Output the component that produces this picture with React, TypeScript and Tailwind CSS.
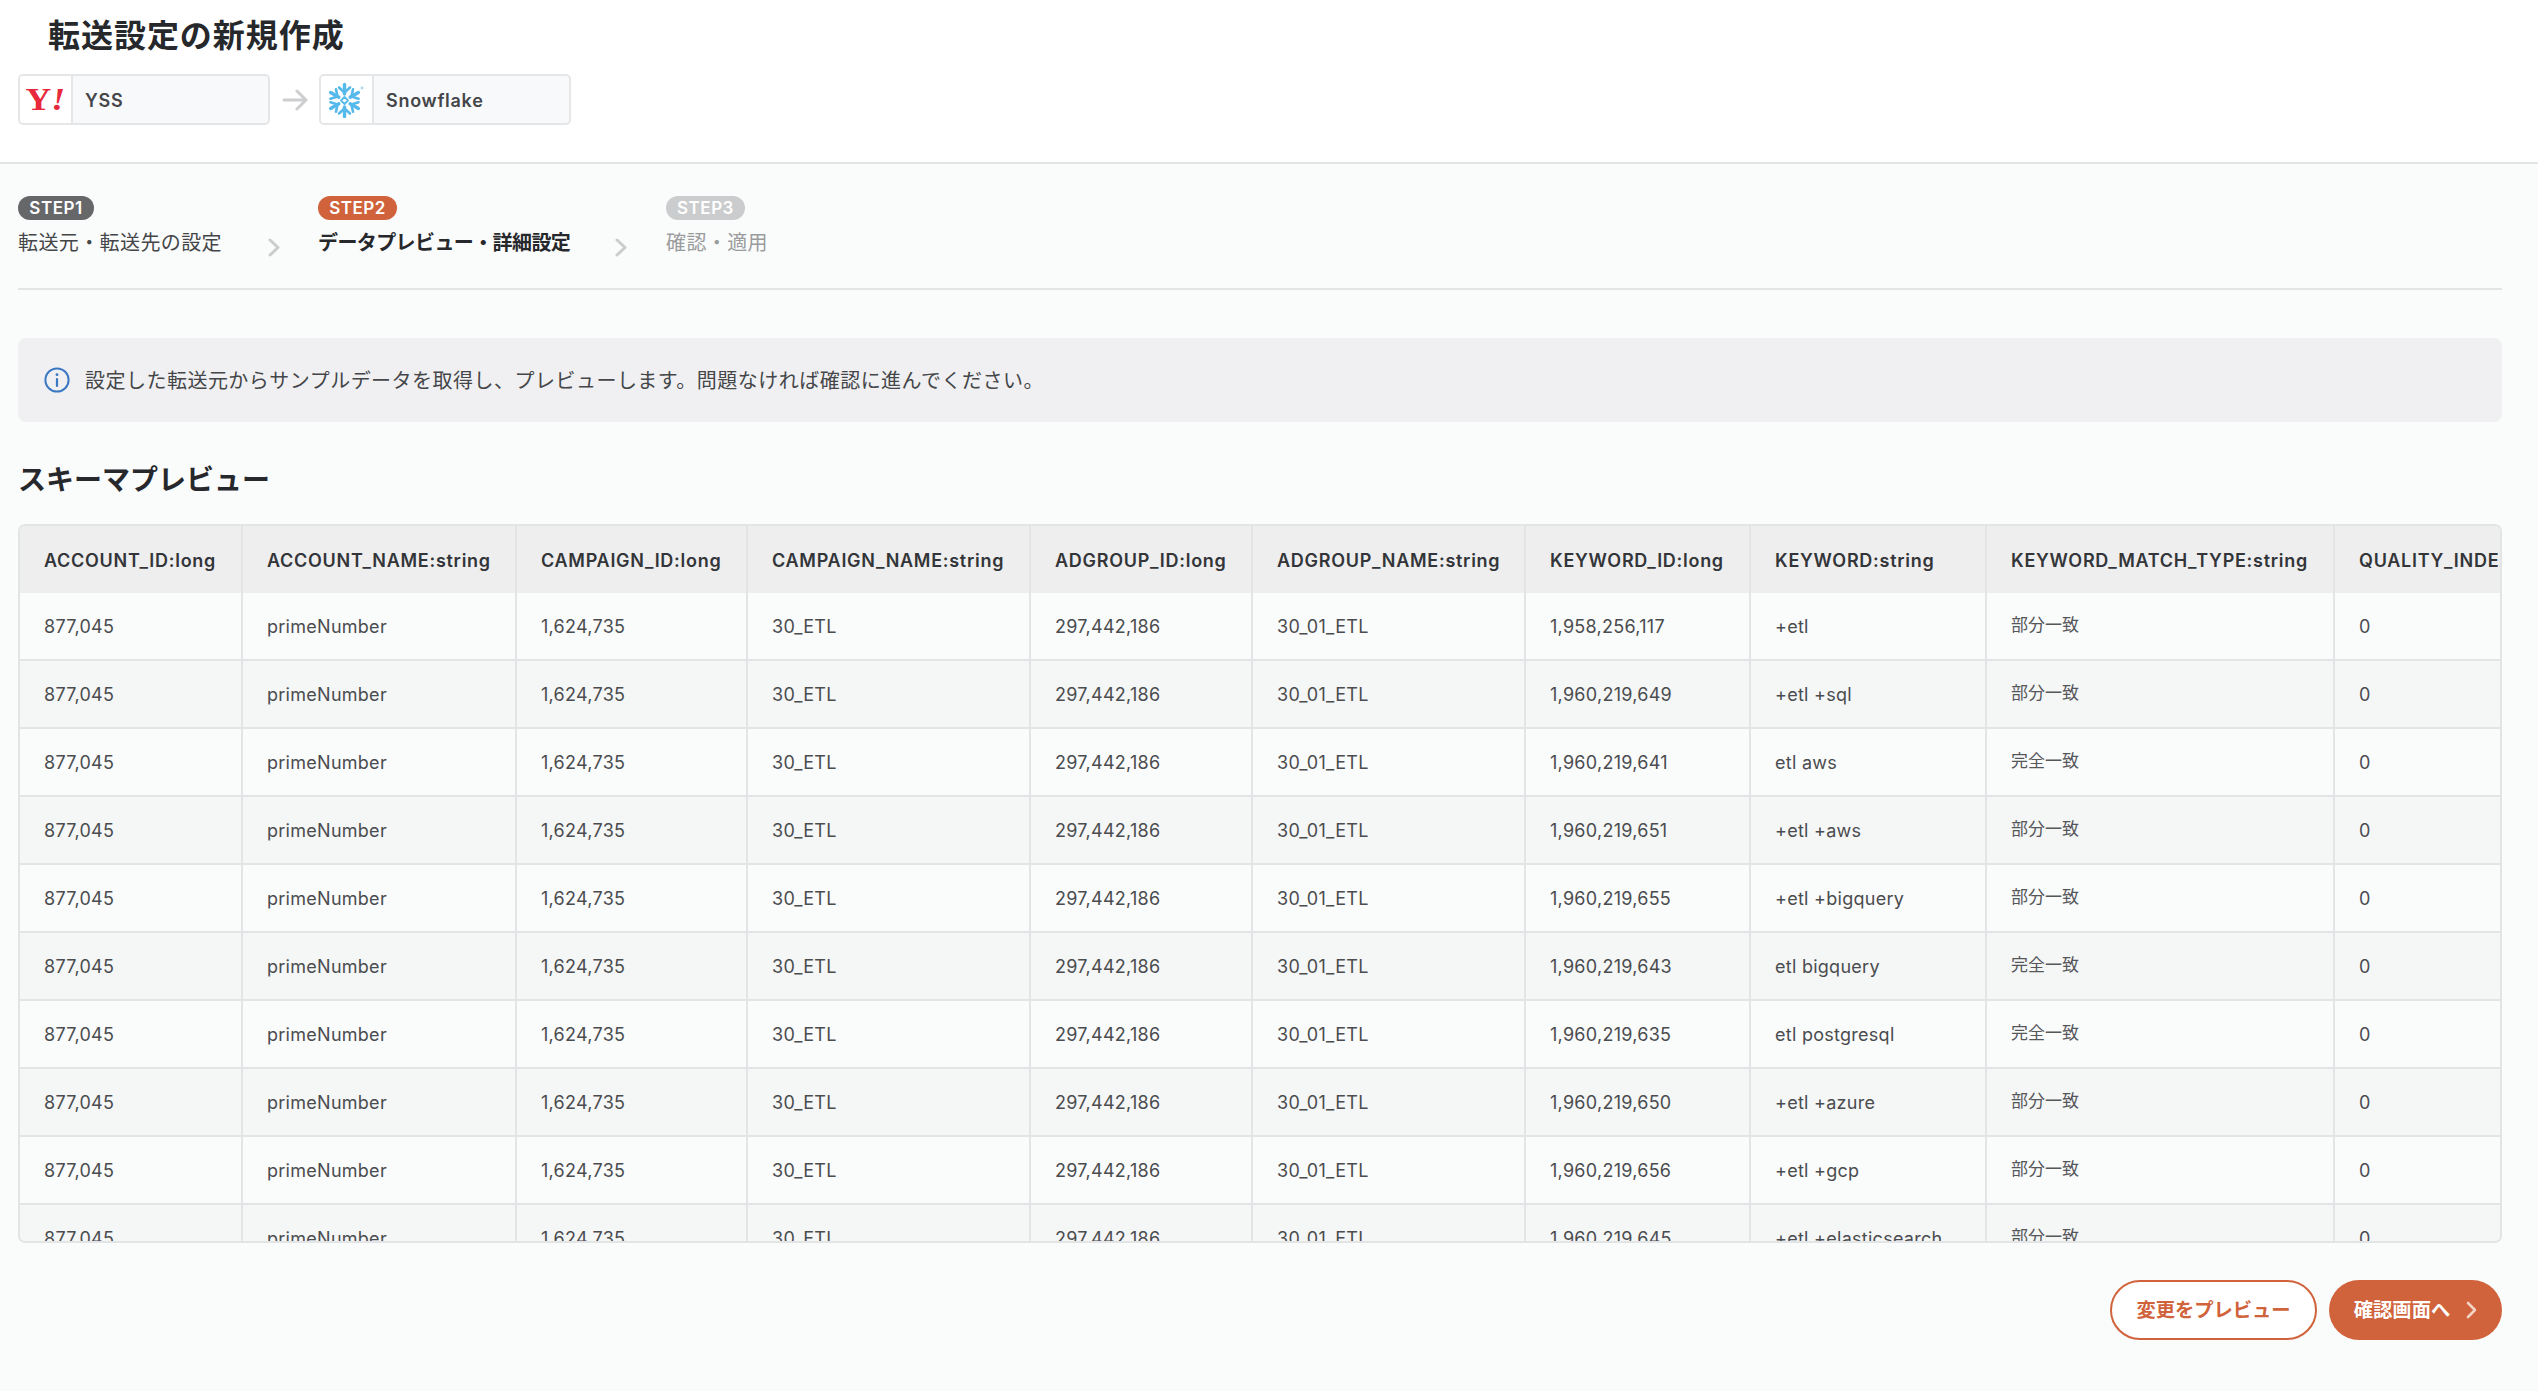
const columns = [
  { name: 'ACCOUNT_ID:long', width: 'w-[223px]' },
  { name: 'ACCOUNT_NAME:string', width: 'w-[274px]' },
  { name: 'CAMPAIGN_ID:long', width: 'w-[231px]' },
  { name: 'CAMPAIGN_NAME:string', width: 'w-[283px]' },
  { name: 'ADGROUP_ID:long', width: 'w-[222px]' },
  { name: 'ADGROUP_NAME:string', width: 'w-[273px]' },
  { name: 'KEYWORD_ID:long', width: 'w-[225px]' },
  { name: 'KEYWORD:string', width: 'w-[236px]' },
  { name: 'KEYWORD_MATCH_TYPE:string', width: 'w-[348px]' },
  { name: 'QUALITY_INDEX:long', width: 'w-[300px]' },
];

const rows = [
  ['1,958,256,117', '+etl', '部分一致'],
  ['1,960,219,649', '+etl +sql', '部分一致'],
  ['1,960,219,641', 'etl aws', '完全一致'],
  ['1,960,219,651', '+etl +aws', '部分一致'],
  ['1,960,219,655', '+etl +bigquery', '部分一致'],
  ['1,960,219,643', 'etl bigquery', '完全一致'],
  ['1,960,219,635', 'etl postgresql', '完全一致'],
  ['1,960,219,650', '+etl +azure', '部分一致'],
  ['1,960,219,656', '+etl +gcp', '部分一致'],
  ['1,960,219,645', '+etl +elasticsearch', '部分一致'],
];

const SnowflakeLogo = () => (
  <svg className="-ml-[2px]" width="38" height="36" viewBox="0 0 38 36" fill="none" stroke="#56b9eb" strokeWidth="3.4" strokeLinecap="round" strokeLinejoin="round">
    {[0, 60, 120, 180, 240, 300].map((angle) => (
      <g key={angle} transform={`rotate(${angle} 17.5 18.5)`}>
        <path d="M17.5 12V2.5" />
        <path d="M12 5.5L17.5 10.5L23 5.5" strokeWidth="2.6" />
      </g>
    ))}
    <path d="M17.5 15L21 18.5L17.5 22L14 18.5Z" strokeWidth="1.8" />
    <circle cx="35" cy="6" r="1.4" fill="#a8d8f0" stroke="none" />
  </svg>
);

const Chevron = () => (
  <svg width="12" height="19" viewBox="0 0 12 19" fill="none" stroke="#cccccc" strokeWidth="3" strokeLinecap="round" strokeLinejoin="round">
    <path d="M2 2L10 9.5L2 17" />
  </svg>
);

const Chip = ({ logo, label }: { logo: React.ReactNode; label: string }) => (
  <div className="flex h-[51px] w-[252px] overflow-hidden rounded-[5px] border-2 border-[#e5e6e7] bg-[#f8f9fb]">
    <div className="flex w-[53px] items-center justify-center border-r-2 border-[#e5e6e7] bg-white">{logo}</div>
    <div className="flex items-center pt-[2px] pl-[12px] text-[18px] font-semibold tracking-[0.04em] text-[#444649]">{label}</div>
  </div>
);

const App = () => {
  return (
    <div className="h-[1391px] w-full overflow-hidden bg-[#fafbfb] font-[Inter,'Noto_Sans_CJK_JP',sans-serif] text-[#444649]">
      <header className="h-[164px] border-b-2 border-[#e3e4e5] bg-white px-[18px]">
        <h1 className="pt-[16px] pl-[30px] text-[32px] leading-[40px] font-bold tracking-[0.03em] text-[#26282b]">転送設定の新規作成</h1>
        <div className="mt-[18px] flex items-center">
          <Chip
            label="YSS"
            logo={
              <span className="scale-x-[1.15] font-['Liberation_Serif',serif] text-[31px] leading-none font-bold text-[#e8293c]">
                Y<span className="italic">!</span>
              </span>
            }
          />
          <svg className="mr-[11px] ml-[12px]" width="26" height="22" viewBox="0 0 26 22" fill="none" stroke="#cdcecf" strokeWidth="3" strokeLinecap="round" strokeLinejoin="round">
            <path d="M2 11H24M15 2L24 11L15 20" />
          </svg>
          <Chip label="Snowflake" logo={<SnowflakeLogo />} />
        </div>
      </header>

      <main className="pr-[36px] pl-[18px]">
        <div className="flex h-[126px] items-start border-b-2 border-[#e3e4e5] pt-[32px]">
          <div className="w-[250px]">
            <span className="block h-[24px] w-[76px] rounded-full bg-[#666769] text-center text-[17px] leading-[24px] font-semibold tracking-[0.03em] text-white">STEP1</span>
            <p className="mt-[8px] text-[20px] leading-[30px] tracking-[0.02em] text-[#444649]">転送元・転送先の設定</p>
          </div>
          <div className="mt-[42px] w-[50px]"><Chevron /></div>
          <div className="w-[297px]">
            <span className="block h-[24px] w-[79px] rounded-full bg-[#d0633b] text-center text-[17px] leading-[24px] font-semibold tracking-[0.03em] text-white">STEP2</span>
            <p className="mt-[8px] text-[20px] leading-[30px] font-bold tracking-[-0.03em] text-[#26282b]">データプレビュー・詳細設定</p>
          </div>
          <div className="mt-[42px] w-[51px]"><Chevron /></div>
          <div>
            <span className="block h-[24px] w-[79px] rounded-full bg-[#cbcccd] text-center text-[17px] leading-[24px] font-semibold tracking-[0.03em] text-white">STEP3</span>
            <p className="mt-[8px] text-[20px] leading-[30px] tracking-[0.02em] text-[#9a9b9d]">確認・適用</p>
          </div>
        </div>

        <div className="mt-[48px] flex h-[84px] items-center rounded-[8px] bg-[#f0f0f2] pl-[26px]">
          <svg width="26" height="26" viewBox="0 0 26 26" fill="none" stroke="#3a78c2" strokeWidth="2" strokeLinecap="round">
            <circle cx="13" cy="13" r="11.6" />
            <path d="M13 12V19" strokeWidth="2.2" />
            <path d="M13 7.6V7.7" strokeWidth="2.8" />
          </svg>
          <p className="ml-[15px] pt-[1px] text-[20px] leading-[30px] tracking-[0.024em] text-[#444649]">設定した転送元からサンプルデータを取得し、プレビューします。問題なければ確認に進んでください。</p>
        </div>

        <h2 className="mt-[41px] text-[28px] leading-[34px] font-bold text-[#26282b]">スキーマプレビュー</h2>

        <div className="mt-[27px] h-[719px] overflow-hidden rounded-[7px] border-2 border-[#e3e4e5]">
          <table className="w-[2615px] table-fixed border-separate border-spacing-0 text-left">
            <colgroup>
              {columns.map((column) => (
                <col key={column.name} className={column.width} />
              ))}
            </colgroup>
            <thead>
              <tr className="h-[67px] bg-[#eeeeef]">
                {columns.map((column) => (
                  <th key={column.name} className="border-r-2 border-[#e3e4e5] pt-[2px] pl-[24px] text-[18px] font-semibold tracking-[0.04em] whitespace-nowrap text-[#333539]">
                    {column.name}
                  </th>
                ))}
              </tr>
            </thead>
            <tbody>
              {rows.map((row) => (
                <tr key={row[0]} className="h-[68px] even:bg-[#f5f6f6]">
                  {['877,045', 'primeNumber', '1,624,735', '30_ETL', '297,442,186', '30_01_ETL', row[0], row[1]].map((cell, i) => (
                    <td key={i} className="border-r-2 border-b-2 border-[#e3e4e5] pt-[1px] pl-[24px] text-[18px] tracking-[0.015em] whitespace-nowrap text-[#4a4c4f]">
                      {cell}
                    </td>
                  ))}
                  <td className="border-r-2 border-b-2 border-[#e3e4e5] pl-[24px] text-[17px] whitespace-nowrap text-[#55575a]">{row[2]}</td>
                  <td className="border-r-2 border-b-2 border-[#e3e4e5] pt-[1px] pl-[24px] text-[18px] text-[#4a4c4f]">0</td>
                </tr>
              ))}
            </tbody>
          </table>
        </div>

        <div className="mt-[37px] flex justify-end gap-[12px]">
          <button className="h-[60px] w-[207px] rounded-full border-2 border-[#d0633b] bg-white text-[19.3px] font-semibold text-[#d0633b]">変更をプレビュー</button>
          <button className="flex h-[60px] w-[173px] items-center justify-center gap-[16px] rounded-full bg-[#d0633b] text-[19.3px] font-semibold text-white">
            確認画面へ
            <svg width="11" height="18" viewBox="0 0 11 18" fill="none" stroke="#f3d3c6" strokeWidth="2.6" strokeLinecap="round" strokeLinejoin="round">
              <path d="M2 2L9 9L2 16" />
            </svg>
          </button>
        </div>
      </main>
    </div>
  );
};

export default App;
